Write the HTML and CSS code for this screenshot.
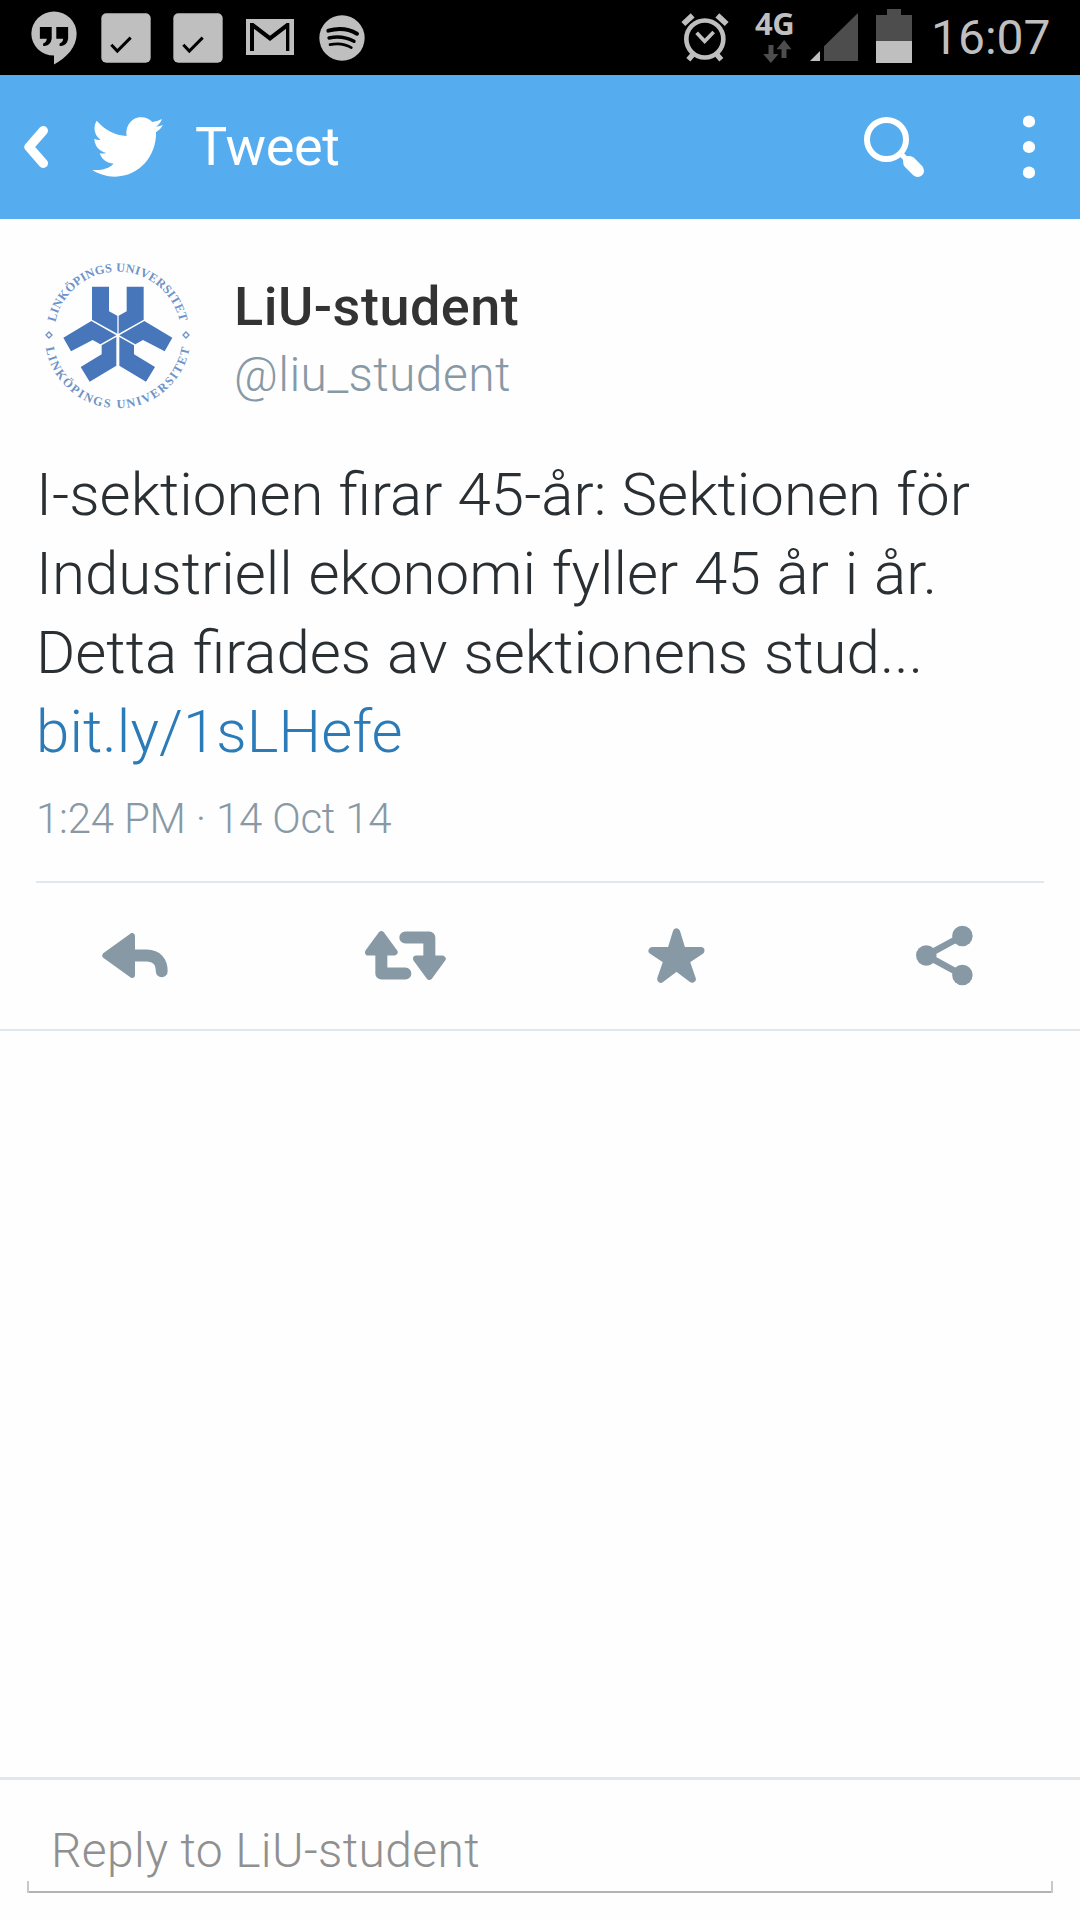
FILE: index.html
```html
<!DOCTYPE html>
<html lang="sv">
<head>
<meta charset="utf-8">
<title>Tweet</title>
<link rel="stylesheet" href="styles.css">
</head>
<body>
<div class="screen">
  <div class="status">
    <div class="status-left">
      <svg class="i-hang" viewBox="92 32 140 163"><path fill="#bfbfbf" d="M162 33a69 67 0 0 1 69 67c0 42-31 74-69 94v-27a69 67 0 0 1 0-134z"/><path d="M119 80h36v36q-3 19-21 22h-5v-8q10-2 11-14h-21zM169 80h36v36q-3 19-21 22h-5v-8q10-2 11-14h-21z"/></svg>
      <svg class="i-check" viewBox="303 39 150 150"><rect x="304" y="40" width="148" height="148" rx="15" fill="#bfbfbf"/><path d="M334 134l18 19 40-40" fill="none" stroke="#000" stroke-width="9"/></svg>
      <svg class="i-check" viewBox="303 39 150 150"><rect x="304" y="40" width="148" height="148" rx="15" fill="#bfbfbf"/><path d="M334 134l18 19 40-40" fill="none" stroke="#000" stroke-width="9"/></svg>
      <svg class="i-mail" viewBox="738 57 144 108"><path fill="#bfbfbf" d="M738 57h144v108H738z"/><path d="M750 153V69h10l50 38 50-38h8v84h-10V86l-48 37-48-37v67z"/></svg>
      <svg class="i-spot" viewBox="957 45 138 138"><circle cx="1026" cy="114" r="68" fill="#bfbfbf"/><g fill="none" stroke="#000" stroke-linecap="round"><path stroke-width="12" d="M985 92q48-13 86 9"/><path stroke-width="10" d="M987 114q40-9 75 10"/><path stroke-width="8" d="M990 134q36-8 64 9"/></g></svg>
    </div>
    <div class="status-right">
      <svg class="i-alarm" viewBox="63 39 144 147"><g fill="none" stroke="#bfbfbf"><circle cx="134.500" cy="117" r="55.500" stroke-width="14"/><path stroke-width="11" d="M110 98l24 26 27-28"/><path stroke-width="17" d="M70 72l28-26M200 72l-28-26"/><path stroke-width="16" d="M98 164l-13 15M171 164l13 15"/></g></svg>
      <div class="net"><span class="net-label">4G</span>
        <svg class="i-arrows" viewBox="308 120 86 69"><path fill="#4d4d4d" d="M324 135h15v27h15l-23 27-23-27h16zM363 174h15v-26h15l-22-28-23 28h15z"/></svg></div>
      <svg class="i-signal" viewBox="450 39 144 144"><path fill="#4d4d4d" d="M594 39v144H492v-44z"/><path fill="#bfbfbf" d="M480 153v30h-30z"/></svg>
      <svg class="i-batt" viewBox="648 27 108 162"><path fill="#4d4d4d" d="M681 27h42v18h33v78H648V45h33z"/><path fill="#bfbfbf" d="M648 123h108v66H648z"/></svg>
      <span class="clock">16:07</span>
    </div>
  </div>
  <header class="bar">
    <svg class="i-back" viewBox="72 168 72 126"><path fill="none" stroke="#fff" stroke-width="28" stroke-linecap="round" stroke-linejoin="round" d="M130 182L87 231l43 49"/></svg>
    <svg class="i-bird" viewBox="276 141 213 180"><path fill="#fff" d="M277 300C320 302 335 287 341 281C318 280 304 265 299 250q9 2 20-1C297 243 284 228 283 206q8 5 19 4C283 195 278 172 290 152C312 178 345 196 380 198C375 165 398 142 423 142C438 142 448 147 457 156Q472 154 486 147Q482 160 468 170Q480 168 489 165Q482 178 468 187C470 255 420 320 345 320C318 320 296 312 277 300z"/></svg>
    <h1 class="title">Tweet</h1>
    <svg class="i-search" viewBox="132 141 180 180"><circle cx="199.500" cy="208.500" r="58.500" fill="none" stroke="#fff" stroke-width="18"/><path stroke="#fff" stroke-width="16" d="M241 250l16 16"/><path fill="#fff" d="M249 272q2-13 16-14 10-1 17 5l25 26q8 10 3 22-7 11-19 10-7-1-12-6l-24-24q-6-6-6-19z"/></svg>
    <svg class="i-more" viewBox="609 135 36 192"><g fill="#fff"><circle cx="627" cy="154.500" r="18.300"/><circle cx="627" cy="231" r="18.300"/><circle cx="627" cy="307.500" r="18.300"/></g></svg>
  </header>
  <main class="tweet">
    <div class="author">
      <svg class="avatar" viewBox="0 0 540 510">
        <g fill="#4776bb"><path d="M186 110h51v74l25 13v54l-76-42zM290 110h51v99l-75 42v-54l24-13zM100 263l84-50 75 43-48 27-23-13-65 34zM427 263l-84-50-75 43 48 27 23-13 65 34zM259 261v86l-80 48-27-44 63-38v-27zM268 261v86l80 48 27-44-63-38v-27z"/></g>
        <g fill="none" stroke="#6f93c9" stroke-width="4"><path d="M57 246l9 9-9 9-9-9zM468 246l9 9-9 9-9-9z"/></g>
        <path id="arc-top" fill="none" d="M76 217A191 191 0 0 1 450 217"/>
        <path id="arc-bottom" fill="none" d="M47.200 293A219 219 0 0 0 478.800 293"/>
        <g class="seal"><text><textPath href="#arc-top" textLength="520">LINKÖPINGS UNIVERSITET</textPath></text>
        <text><textPath href="#arc-bottom" textLength="611">LINKÖPINGS UNIVERSITET</textPath></text></g>
      </svg>
      <div class="names"><div class="name">LiU-student</div><div class="handle">@liu_student</div></div>
    </div>
    <p class="text"><span class="line-a">I-sektionen firar 45-år: Sektionen för</span><br><span class="line-b">Industriell ekonomi fyller 45 år i år.</span><br><span class="line-b">Detta firades av sektionens stud...</span><br><a class="link">bit.ly/1sLHefe</a></p>
    <div class="date">1:24 PM · 14 Oct 14</div>
  </main>
  <nav class="actions">
    <div class="action"><svg class="i-reply" viewBox="65 217 200 136"><path fill="#8899a6" stroke="#8899a6" stroke-width="18" stroke-linejoin="round" d="M75 285l81-59v118z"/><path fill="none" stroke="#8899a6" stroke-width="36" stroke-linecap="round" d="M160 285h40q46 2 46 48"/></svg></div>
    <div class="action"><svg class="i-rt" viewBox="857 212 243 146"><g fill="none" stroke="#8899a6" stroke-width="36" stroke-linecap="round" stroke-linejoin="round"><path d="M906 270v69h72M1050 300v-69h-72"/></g><g fill="#8899a6" stroke="#8899a6" stroke-width="20" stroke-linejoin="round"><path d="M906 222l39 53h-78zM1050 348l39-53h-78z"/></g></svg></div>
    <div class="action"><svg class="i-star" viewBox="143 201 170 165"><path fill="#8899a6" stroke="#8899a6" stroke-width="22" stroke-linejoin="round" d="M228 213l17 56h56l-45 30 19 55-47-35-47 35 19-55-45-30h56z"/></svg></div>
    <div class="action"><svg class="i-share" viewBox="948 194 172 182"><path fill="none" stroke="#8899a6" stroke-width="20" d="M1088 226l-109 59 109 59"/><g fill="#8899a6"><circle cx="979" cy="285" r="31"/><circle cx="1088" cy="226" r="31"/><circle cx="1088" cy="344" r="31"/></g></svg></div>
  </nav>
  <footer class="reply"><div class="field">Reply to LiU-student</div></footer>
</div>
</body>
</html>
```

FILE: styles.css
```css
* { box-sizing: border-box; }
body { margin: 0; background: #fefefe; font-family: Roboto, "Liberation Sans", sans-serif; }
svg { display: block; flex: none; }
.screen { width: 1080px; height: 1920px; display: flex; flex-direction: column; overflow: hidden; }

.status { height: 75px; flex: none; background: #000; display: flex; justify-content: space-between; padding: 0 31px 0 31px; }
.status-left, .status-right { display: flex; align-items: flex-start; }
.i-hang { width: 46px; height: 54px; margin-top: 11px; }
.i-check { width: 50px; height: 50px; margin: 13px 0 0 24px; }
.i-check + .i-check { margin-left: 22px; }
.i-mail { width: 48px; height: 36px; margin: 19px 0 0 23px; }
.i-spot { width: 46px; height: 46px; margin: 15px 0 0 25px; }
.i-alarm { width: 48px; height: 49px; margin-top: 13px; }
.net { width: 39px; margin-left: 26px; padding-top: 7px; }
.net-label { display: block; height: 33px; font: bold 31px/32px "Open Sans", sans-serif; letter-spacing: -0.5px; color: #bfbfbf; }
.i-arrows { width: 29px; height: 23px; margin-left: 8px; }
.i-signal { width: 48px; height: 48px; margin: 13px 0 0 16px; }
.i-batt { width: 36px; height: 54px; margin: 9px 0 0 18px; }
.clock { width: 118px; margin-left: 19px; font-size: 48px; line-height: 75px; color: #bfbfbf; font-weight: 400; letter-spacing: 0; white-space: nowrap; }

.bar { height: 144px; flex: none; background: #55acee; display: flex; align-items: center; padding: 0 45px 0 24px; }
.i-back { width: 24px; height: 42px; }
.i-bird { width: 71px; height: 60px; margin-left: 44px; }
.title { margin: 0 auto 0 32px; font-size: 54px; line-height: 64px; font-weight: 400; letter-spacing: -0.3px; color: #fff; }
.i-search { width: 60px; height: 60px; }
.i-more { width: 12px; height: 64px; margin-left: 99px; }

.tweet { height: 664px; flex: none; margin: 0 36px; padding-top: 31px; border-bottom: 2px solid #e1e8ed; }
.author { display: flex; margin-left: -6px; height: 170px; }
.avatar { width: 180px; height: 170px; }
.seal { font: bold 37px "Liberation Serif", serif; fill: #6f93c9; }
.names { margin-left: 24px; padding-top: 25px; white-space: nowrap; }
.name { font-size: 54px; line-height: 64px; font-weight: 500; letter-spacing: 0.5px; color: #333; }
.handle { font-size: 48px; line-height: 72px; font-weight: 300; letter-spacing: 0.4px; color: #8899a6; }
.text { margin: 35px 0 0; font-size: 60px; line-height: 79px; font-weight: 300; color: #292f33; white-space: nowrap; }
.line-a { word-spacing: 0.6px; }
.line-b { word-spacing: 1.2px; }
.link { color: #2b7bb9; letter-spacing: 0.1px; }
.date { margin-top: 23px; font-size: 42px; line-height: 50px; font-weight: 300; letter-spacing: -0.2px; color: #8899a6; }

.actions { height: 148px; flex: none; display: grid; grid-template-columns: repeat(4, 270px); align-items: center; justify-items: center; padding-bottom: 2px; border-bottom: 2px solid #e1e8ed; }
.i-reply { width: 66px; height: 45px; }
.i-rt { width: 81px; height: 49px; margin-left: 1px; }
.i-star { width: 57px; height: 55px; margin-left: 2px; }
.i-share { width: 57px; height: 61px; margin-right: 1px; }

.reply { margin-top: auto; height: 143px; flex: none; border-top: 3px solid #e1e8ed; padding: 38px 27px 0; }
.field { position: relative; height: 75px; padding-left: 24px; border-bottom: 2px solid #b3b3b3; font-size: 48px; line-height: 66px; font-weight: 300; letter-spacing: 0.37px; color: #909090; }
.field::before, .field::after { content: ""; position: absolute; bottom: -2px; width: 2px; height: 12px; background: #c8c8c8; }
.field::before { left: 0; }
.field::after { right: 0; }
```
